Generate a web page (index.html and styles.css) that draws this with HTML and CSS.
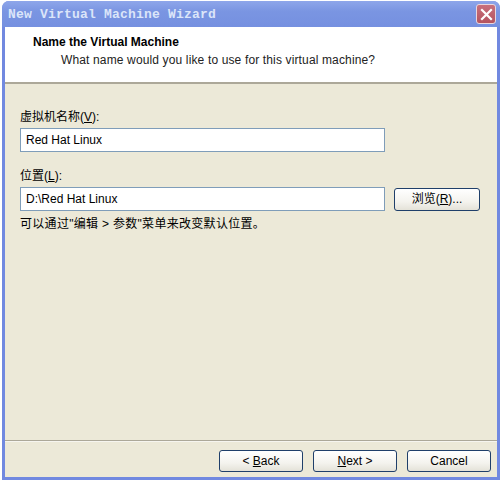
FILE: index.html
```html
<!DOCTYPE html>
<html>
<head>
<meta charset="utf-8">
<link rel="stylesheet" href="styles.css">
</head>
<body>
<div class="window">
  <div class="titlebar">
    <span class="title">New Virtual Machine Wizard</span>
    <span class="close">
      <svg width="13" height="13" viewBox="0 0 13 13"><path d="M2 2 L11 11 M11 2 L2 11" stroke="#fff" stroke-width="2.2" stroke-linecap="square"/></svg>
    </span>
  </div>
  <div class="client">
    <div class="header">
      <div class="h-title">Name the Virtual Machine</div>
      <div class="h-sub">What name would you like to use for this virtual machine?</div>
    </div>
    <div class="content">
      <div class="label">虚拟机名称(<u>V</u>):</div>
      <div class="row">
        <div class="input">Red Hat Linux</div>
      </div>
      <div class="label label2">位置(<u>L</u>):</div>
      <div class="row">
        <div class="input">D:\Red Hat Linux</div>
        <div class="btn browse">浏览(<u>R</u>)...</div>
      </div>
      <div class="hint">可以通过"编辑 &gt; 参数"菜单来改变默认位置。</div>
    </div>
    <div class="footer">
      <div class="btn">&lt; <u>B</u>ack</div>
      <div class="btn"><u>N</u>ext &gt;</div>
      <div class="btn">Cancel</div>
    </div>
  </div>
</div>
</body>
</html>
```

FILE: styles.css
```css
html, body {
  margin: 0;
  padding: 0;
  background: #ffffff;
}
body {
  width: 503px;
  height: 480px;
  overflow: hidden;
  font-family: "Liberation Sans", "Noto Sans CJK SC", sans-serif;
  font-size: 12px;
  color: #000;
}
.window {
  margin: 1px 0 0 2px;
  width: 498px;
  height: 479px;
  box-sizing: border-box;
  background: #7189e0;
  border-radius: 7px 7px 0 0;
  padding: 0 3px 3px 3px;
  display: flex;
  flex-direction: column;
}
.titlebar {
  height: 26px;
  flex: none;
  display: flex;
  align-items: center;
  justify-content: space-between;
  background: linear-gradient(#8ea6ea, #7a95e2 40%, #7590e0);
  border-radius: 7px 7px 0 0;
  margin: 0 -3px;
  padding: 1px 3px 0 6px;
  box-sizing: border-box;
}
.title {
  font-family: "Liberation Mono", monospace;
  font-weight: bold;
  font-size: 13px;
  color: #dbe5f9;
  letter-spacing: 0.2px;
}
.close {
  width: 20px;
  height: 20px;
  box-sizing: border-box;
  border: 1px solid #e9d6dc;
  border-radius: 3px;
  background: linear-gradient(#c8707c, #b5545f);
  display: flex;
  align-items: center;
  justify-content: center;
  margin-right: 1px;
  margin-top: -1px;
}
.client {
  flex: 1;
  display: flex;
  flex-direction: column;
  background: #ece9d8;
}
.header {
  height: 55px;
  flex: none;
  background: #fff;
  border-bottom: 2px solid #aca899;
  box-sizing: content-box;
  padding-left: 28px;
}
.h-title {
  font-weight: bold;
  margin-top: 8px;
  line-height: 14px;
}
.h-sub {
  margin-top: 4px;
  padding-left: 28px;
  line-height: 14px;
  color: #222;
  letter-spacing: 0.14px;
}
.content {
  flex: 1;
  padding: 25px 15px 0 15px;
}
.label {
  line-height: 17px;
  height: 17px;
}
.label2 {
  margin-top: 16px;
}
.row {
  display: flex;
  align-items: center;
  gap: 9px;
  margin-top: 2px;
}
.input {
  width: 365px;
  height: 24px;
  box-sizing: border-box;
  border: 1px solid #7f9db9;
  background: #fff;
  padding-left: 5px;
  line-height: 22px;
}
.btn {
  width: 84px;
  height: 22px;
  box-sizing: border-box;
  border: 1px solid #1f3f6a;
  border-radius: 3px;
  background: linear-gradient(#ffffff, #f4f3ee 60%, #e4e2d8);
  text-align: center;
  line-height: 20px;
  color: #000;
}
.browse {
  width: 86px;
  height: 23px;
}
.hint {
  margin-top: 5px;
  line-height: 17px;
  letter-spacing: 0.3px;
}
.footer {
  flex: none;
  height: 37px;
  border-top: 1px solid #aca899;
  box-shadow: inset 0 1px 0 #f6f5ef;
  display: flex;
  justify-content: flex-end;
  align-items: flex-start;
  gap: 10px;
  padding: 9px 6px 0 0;
  box-sizing: border-box;
}
```
